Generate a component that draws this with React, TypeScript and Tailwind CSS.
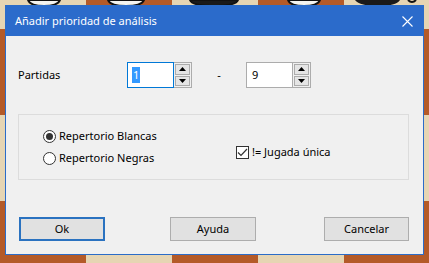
import React from 'react';

const FONT = { fontFamily: '"Noto Sans", "Open Sans", sans-serif' };

const Spin: React.FC<{ value: string; focused?: boolean }> = ({ value, focused }) => (
  <div className="flex h-[26px]">
    <div
      className={`w-[47px] h-full bg-white border flex items-center pl-[4px] ${
        focused ? 'border-[#0078d7]' : 'border-[#acacac]'
      }`}
    >
      {focused ? (
        <span className="bg-[#3399ff] text-white px-[1px] leading-[16px]">{value}</span>
      ) : (
        <span className="leading-[16px] pl-[1px]">{value}</span>
      )}
    </div>
    <div className="w-[18px] h-full border border-[#acacac] border-l-0 bg-[#f0f0f0] flex flex-col p-[1px] gap-[1px]">
      <div className="flex-1 bg-[#e5e5e5] border border-[#acacac] flex items-center justify-center">
        <svg width="7" height="4" viewBox="0 0 7 4"><path d="M0 4 L3.5 0 L7 4 Z" fill="#000" /></svg>
      </div>
      <div className="flex-1 bg-[#e5e5e5] border border-[#acacac] flex items-center justify-center">
        <svg width="7" height="4" viewBox="0 0 7 4"><path d="M0 0 L3.5 4 L7 0 Z" fill="#000" /></svg>
      </div>
    </div>
  </div>
);

const Radio: React.FC<{ label: string; checked?: boolean }> = ({ label, checked }) => (
  <div className="flex items-center gap-[3px] h-[16px]">
    <div className="w-[13px] h-[13px] rounded-full border border-[#333] bg-white flex items-center justify-center">
      {checked && <div className="w-[7px] h-[7px] rounded-full bg-[#333]" />}
    </div>
    <span>{label}</span>
  </div>
);

const Btn: React.FC<{ label: string; primary?: boolean; w: string }> = ({ label, primary, w }) => (
  <div
    className={`${w} h-[24px] bg-[#e1e1e1] flex items-center justify-center ${
      primary ? 'border-2 border-[#2a72c0]' : 'border border-[#adadad]'
    }`}
  >
    {label}
  </div>
);

const squares = Array.from({ length: 20 }, (_, i) => i);

export default function App() {
  return (
    <div className="relative w-[429px] h-[263px] overflow-hidden text-[11px] text-black" style={FONT}>
      {/* board behind the dialog */}
      <div className="absolute left-0 top-[-57px] grid grid-cols-[repeat(5,86px)] grid-rows-[repeat(4,86px)]">
        {squares.map(i => {
          const r = Math.floor(i / 5);
          const c = i % 5;
          return (
            <div
              key={i}
              className={(r + c) % 2 === 0 ? 'bg-[#e6d5b3]' : 'bg-[#b45a28]'}
            />
          );
        })}
      </div>
      <svg className="absolute left-0 top-0" width="429" height="8" viewBox="0 0 429 8">
        <path d="M28 0 Q30 6 44 6 Q58 6 60 0 Z" fill="#f4f4f0" stroke="#111" strokeWidth="2" />
        <path d="M108 0 Q110 6 126 6 Q142 6 144 0 Z" fill="#f4f4f0" stroke="#111" strokeWidth="2" />
        <path d="M190 0 Q192 6 214 6 Q236 6 238 0 Z" fill="#1a1a1a" stroke="#111" strokeWidth="2" />
        <path d="M288 0 Q290 6 304 6 Q318 6 320 0 Z" fill="#f4f4f0" stroke="#111" strokeWidth="2" />
        <path d="M355 0 Q360 6 378 6 Q396 6 400 0 Z" fill="#1a1a1a" />
        <path d="M408 0 Q412 4 416 0" fill="none" stroke="#111" strokeWidth="2" />
      </svg>

      {/* dialog */}
      <div className="absolute left-[5px] top-[5px] w-[419px] h-[250px] border border-[#2b6cc8] bg-[#f0f0f0] flex flex-col">
        <div className="h-[30px] bg-[#2b6bcb] text-white flex items-center justify-between pl-[9px] pr-[10px] shrink-0">
          <span className="text-[11px]">Añadir prioridad de análisis</span>
          <svg width="11" height="11" viewBox="0 0 11 11">
            <path d="M0.5 0.5 L10.5 10.5 M10.5 0.5 L0.5 10.5" stroke="#fff" strokeWidth="1.1" />
          </svg>
        </div>

        <div className="flex items-center mt-[26px] pl-[12px] h-[26px]">
          <span className="w-[109px]">Partidas</span>
          <Spin value="1" focused />
          <span className="w-[54px] text-center">-</span>
          <Spin value="9" />
        </div>

        <div className="ml-[12px] mt-[26px] w-[391px] h-[66px] border border-[#dcdcdc] flex items-center">
          <div className="flex flex-col gap-[6px] ml-[24px] w-[193px]">
            <Radio label="Repertorio Blancas" checked />
            <Radio label="Repertorio Negras" />
          </div>
          <div className="flex items-center gap-[3px] mt-[10px]">
            <div className="w-[13px] h-[13px] border border-[#333] bg-white flex items-center justify-center">
              <svg width="11" height="9" viewBox="0 0 11 9">
                <path d="M1 4.5 L4 7.5 L10 1" fill="none" stroke="#333" strokeWidth="1.2" />
              </svg>
            </div>
            <span>!= Jugada única</span>
          </div>
        </div>

        <div className="flex mt-[37px] pl-[13px]">
          <Btn label="Ok" primary w="w-[86px]" />
          <div className="w-[65px]" />
          <Btn label="Ayuda" w="w-[86px]" />
          <div className="w-[68px]" />
          <Btn label="Cancelar" w="w-[85px]" />
        </div>
      </div>
    </div>
  );
}
